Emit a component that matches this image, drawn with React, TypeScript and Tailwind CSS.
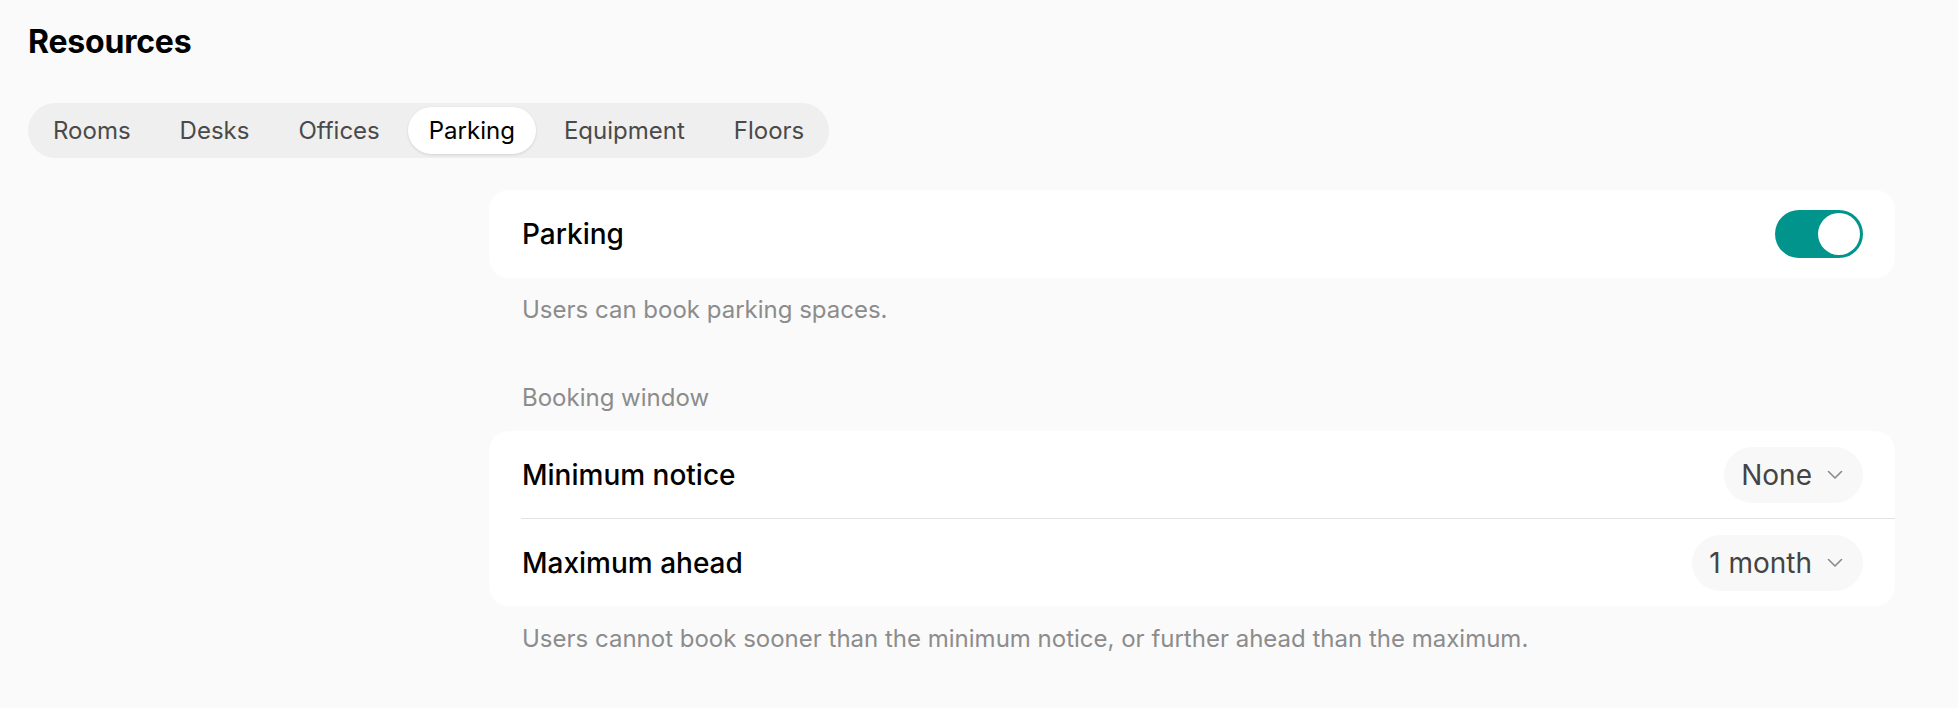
import { useState } from "react";

const tabs = ["Rooms", "Desks", "Offices", "Parking", "Equipment", "Floors"];

const Chevron = () => (
  <svg width="16" height="10" viewBox="0 0 16 10" fill="none" className="shrink-0">
    <polyline points="1.5,1.5 8,8 14.5,1.5" stroke="#8a8a8a" strokeWidth="1.6" strokeLinecap="round" strokeLinejoin="round" />
  </svg>
);

const SelectPill = ({ value }: { value: string }) => (
  <button className="flex items-center h-[56px] pl-[17px] pr-[20px] gap-[15px] rounded-full bg-[#f8f8f8] text-[28px] leading-[36px] text-[#444444]">
    <span>{value}</span>
    <Chevron />
  </button>
);

const App = () => {
  const [active, setActive] = useState("Parking");
  const [parking, setParking] = useState(true);

  return (
    <div className="min-h-screen bg-[#fafafa] px-[28px] pt-[22px] font-['Inter',sans-serif] text-black">
      {/* Header */}
      <h1 className="text-[32px] leading-[40px] font-bold tracking-[-0.2px]">Resources</h1>

      {/* Tabs */}
      <div className="mt-[41px] inline-flex items-center gap-[7px] p-[4px] rounded-full bg-[#efefef]">
        {tabs.map((t) => (
          <button
            key={t}
            onClick={() => setActive(t)}
            className={`h-[47px] px-[21px] rounded-full text-[24px] leading-[32px] ${
              active === t
                ? "bg-white text-black shadow-[0_1px_3px_rgba(0,0,0,0.12)]"
                : "text-[#4a4a4a]"
            }`}
          >
            {t}
          </button>
        ))}
      </div>

      {/* Settings */}
      <div className="mt-[32px] ml-[461px] mr-[35px]">
        <div className="flex items-center justify-between h-[88px] pl-[33px] pr-[32px] rounded-[20px] bg-white">
          <span className="text-[28px] leading-[36px] font-medium">Parking</span>
          <button
            onClick={() => setParking(!parking)}
            className={`flex items-center w-[88px] h-[48px] p-[3px] rounded-full ${
              parking ? "justify-end bg-[#00948c]" : "justify-start bg-[#d9d9d9]"
            }`}
          >
            <span className="w-[42px] h-[42px] rounded-full bg-white" />
          </button>
        </div>
        <p className="mt-[16px] pl-[33px] text-[24px] leading-[32px] text-[#8c8c8c]">Users can book parking spaces.</p>

        <p className="mt-[56px] pl-[33px] text-[24px] leading-[32px] text-[#8c8c8c]">Booking window</p>
        <div className="mt-[17px] rounded-[20px] bg-white">
          <div className="flex items-center justify-between h-[87px] pl-[33px] pr-[32px]">
            <span className="text-[28px] leading-[36px] font-medium">Minimum notice</span>
            <SelectPill value="None" />
          </div>
          <div className="ml-[32px] h-px bg-[#e2e2e2]" />
          <div className="flex items-center justify-between h-[87px] pl-[33px] pr-[32px]">
            <span className="text-[28px] leading-[36px] font-medium">Maximum ahead</span>
            <SelectPill value="1 month" />
          </div>
        </div>
        <p className="mt-[17px] pl-[33px] text-[24px] leading-[32px] text-[#8c8c8c]">
          Users cannot book sooner than the minimum notice, or further ahead than the maximum.
        </p>
      </div>
    </div>
  );
};

export default App;
